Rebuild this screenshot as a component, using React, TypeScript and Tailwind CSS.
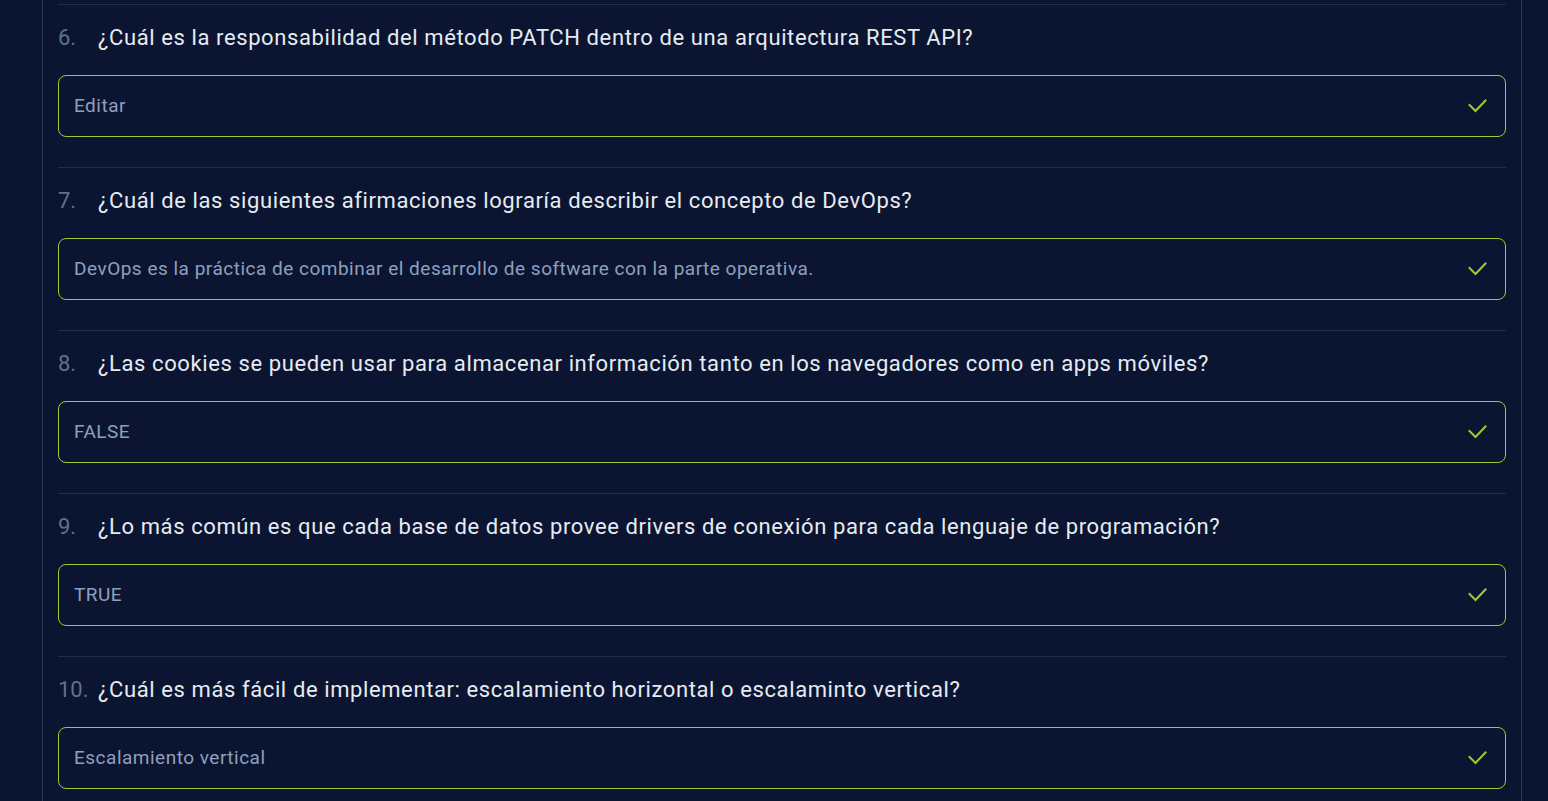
const items = [
  {
    n: "6.",
    q: "¿Cuál es la responsabilidad del método PATCH dentro de una arquitectura REST API?",
    a: "Editar",
  },
  {
    n: "7.",
    q: "¿Cuál de las siguientes afirmaciones lograría describir el concepto de DevOps?",
    a: "DevOps es la práctica de combinar el desarrollo de software con la parte operativa.",
  },
  {
    n: "8.",
    q: "¿Las cookies se pueden usar para almacenar información tanto en los navegadores como en apps móviles?",
    a: "FALSE",
  },
  {
    n: "9.",
    q: "¿Lo más común es que cada base de datos provee drivers de conexión para cada lenguaje de programación?",
    a: "TRUE",
  },
  {
    n: "10.",
    q: "¿Cuál es más fácil de implementar: escalamiento horizontal o escalaminto vertical?",
    a: "Escalamiento vertical",
  },
];

const CheckMark = () => (
  <svg width="19" height="14" viewBox="0 0 19 14" fill="none" className="shrink-0">
    <path
      d="M1.5 6 L7.5 12 L17.5 1.5"
      stroke="#9acd32"
      strokeWidth="2"
      strokeLinecap="square"
    />
  </svg>
);

export default function App() {
  return (
    <div
      className="h-[801px] overflow-hidden bg-[#0b1531]"
      style={{ fontFamily: "Roboto, 'Noto Sans', sans-serif" }}
    >
      <div className="ml-[42px] w-[1480px] border-x border-[#2a3a5e] px-[15px] -mt-[159px]">
        {[{ n: "", q: "", a: "" }, ...items].map((it, i) => (
          <div key={i} className="border-t border-[#1f2e4d] pt-[18px] pb-[30px]">
            <div className="flex items-center h-7 text-[22px] tracking-[0.6px] whitespace-nowrap">
              <span className="w-[40px] text-[#5f7190] tracking-normal">{it.n}</span>
              <span className="text-[#e6ebf2]">{it.q}</span>
            </div>
            <div className="mt-6 h-[62px] rounded-lg border border-[#9acd32] pl-[15px] pr-4 flex items-center justify-between">
              <span className="text-[19px] tracking-[0.5px] text-[#8ea0bf]">{it.a}</span>
              <span className="mr-[2px]">
                <CheckMark />
              </span>
            </div>
          </div>
        ))}
      </div>
    </div>
  );
}
